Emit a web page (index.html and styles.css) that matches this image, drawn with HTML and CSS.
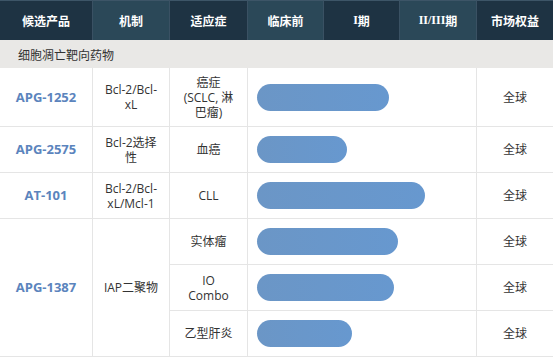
FILE: index.html
```html
<!DOCTYPE html>
<html lang="zh">
<head>
<meta charset="utf-8">
<link rel="stylesheet" href="styles.css">
</head>
<body>
<div class="pipeline">
  <div class="hd dark">候选产品</div>
  <div class="hd light">机制</div>
  <div class="hd dark">适应症</div>
  <div class="hd light">临床前</div>
  <div class="hd dark"><span class="roman">I</span>期</div>
  <div class="hd light"><span class="roman">II/III</span>期</div>
  <div class="hd dark last">市场权益</div>

  <div class="section">细胞凋亡靶向药物</div>

  <div class="c name">APG-1252</div>
  <div class="c">Bcl-2/Bcl-<br>xL</div>
  <div class="c">癌症<br>(SCLC, 淋<br>巴瘤)</div>
  <div class="c track"><span class="bar" style="width:132px"></span></div>
  <div class="c last">全球</div>

  <div class="c name">APG-2575</div>
  <div class="c">Bcl-2选择<br>性</div>
  <div class="c">血癌</div>
  <div class="c track"><span class="bar" style="width:90px"></span></div>
  <div class="c last">全球</div>

  <div class="c name">AT-101</div>
  <div class="c">Bcl-2/Bcl-<br>xL/Mcl-1</div>
  <div class="c">CLL</div>
  <div class="c track"><span class="bar" style="width:168px"></span></div>
  <div class="c last">全球</div>

  <div class="c name span3">APG-1387</div>
  <div class="c span3">IAP二聚物</div>
  <div class="c">实体瘤</div>
  <div class="c track"><span class="bar" style="width:141px"></span></div>
  <div class="c last">全球</div>
  <div class="c">IO<br>Combo</div>
  <div class="c track"><span class="bar" style="width:137px"></span></div>
  <div class="c last">全球</div>
  <div class="c">乙型肝炎</div>
  <div class="c track"><span class="bar" style="width:95px"></span></div>
  <div class="c last">全球</div>
</div>
</body>
</html>
```

FILE: styles.css
```css
* { box-sizing: border-box; }
html, body { margin: 0; padding: 0; background: #fff; }
body {
  font-family: "Open Sans", "Noto Sans CJK SC", sans-serif;
  font-size: 12px;
  color: #333;
}
.pipeline {
  width: 553px;
  display: grid;
  grid-template-columns: 93px 77px 78px 76px 76px 77px 76px;
  grid-template-rows: 40px 28px 59px 46px 46px 46px 46px 46px;
}
.hd {
  display: flex;
  align-items: center;
  justify-content: center;
  color: #fff;
  font-family: "Noto Sans CJK SC", sans-serif;
  font-weight: 700;
  font-size: 12px;
  border-top: 1px solid #3d5567;
  border-right: 1px solid #3a5163;
}
.hd .roman {
  font-family: "Liberation Serif", serif;
  font-weight: 700;
  font-size: 12px;
}
.hd.dark { background: #1e3343; }
.hd.light { background: #2b4858; }
.hd.last { border-right: none; }
.section {
  grid-column: 1 / -1;
  background: #e9e8e6;
  display: flex;
  align-items: center;
  padding-left: 18px;
  font-family: "Noto Sans CJK SC", sans-serif;
  font-size: 12px;
  color: #333;
}
.c {
  display: flex;
  align-items: center;
  justify-content: center;
  text-align: center;
  line-height: 15px;
  white-space: nowrap;
  border-right: 1px solid #e5e5e5;
  border-bottom: 1px solid #e5e5e5;
  color: #333;
}
.c.last { border-right: none; }
.c.name {
  color: #5b84bd;
  font-weight: 700;
  font-size: 13px;
}
.c.span3 { grid-row: span 3; }
.c.track {
  grid-column: span 3;
  justify-content: flex-start;
  padding-left: 9px;
}
.bar {
  display: block;
  height: 27px;
  border-radius: 14px;
  background: linear-gradient(to right, #6b96c6, #6798cf);
}
```
